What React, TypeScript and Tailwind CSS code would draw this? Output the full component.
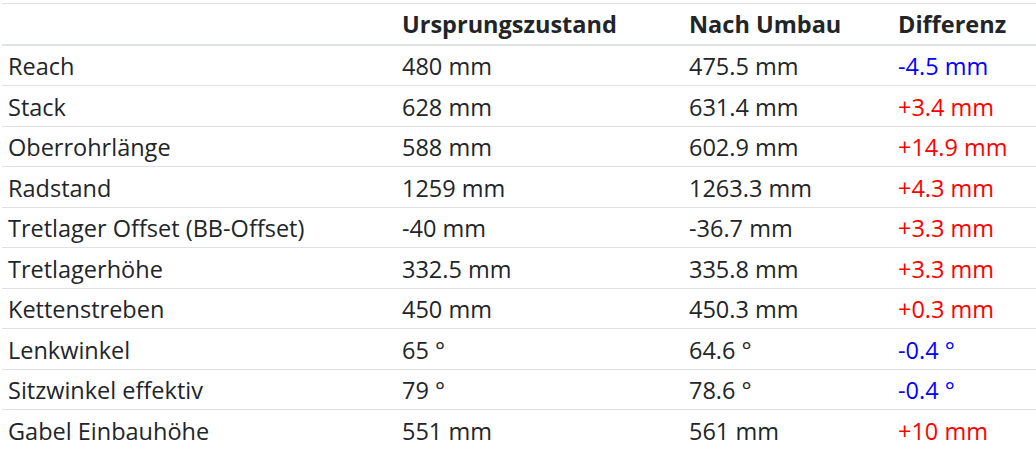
import React from "react";

type Row = { label: string; a: string; b: string; d: string; neg: boolean };

const rows: Row[] = [
  { label: "Reach", a: "480 mm", b: "475.5 mm", d: "-4.5 mm", neg: true },
  { label: "Stack", a: "628 mm", b: "631.4 mm", d: "+3.4 mm", neg: false },
  { label: "Oberrohrlänge", a: "588 mm", b: "602.9 mm", d: "+14.9 mm", neg: false },
  { label: "Radstand", a: "1259 mm", b: "1263.3 mm", d: "+4.3 mm", neg: false },
  { label: "Tretlager Offset (BB-Offset)", a: "-40 mm", b: "-36.7 mm", d: "+3.3 mm", neg: false },
  { label: "Tretlagerhöhe", a: "332.5 mm", b: "335.8 mm", d: "+3.3 mm", neg: false },
  { label: "Kettenstreben", a: "450 mm", b: "450.3 mm", d: "+0.3 mm", neg: false },
  { label: "Lenkwinkel", a: "65 °", b: "64.6 °", d: "-0.4 °", neg: true },
  { label: "Sitzwinkel effektiv", a: "79 °", b: "78.6 °", d: "-0.4 °", neg: true },
  { label: "Gabel Einbauhöhe", a: "551 mm", b: "561 mm", d: "+10 mm", neg: false },
];

const heights = ["h-[40px]", "h-[41px]", "h-[40px]", "h-[41px]", "h-[40px]", "h-[41px]", "h-[40px]", "h-[41px]", "h-[40px]", "h-[40px]"];

export default function App() {
  return (
    <div className="w-[1036px] h-[472px] bg-white overflow-hidden pt-[3px] pl-[2px] text-[#212529] text-[23.5px] leading-none font-['Open_Sans',sans-serif]">
      <div className="border-t border-[#dee2e6]">
        <div className="grid grid-cols-[394px_287px_209px_144px] h-[42px] pt-[2px] items-center border-b-2 border-[#dee2e6] font-bold">
          <div className="pl-[6px]"></div>
          <div className="pl-[6px]">Ursprungszustand</div>
          <div className="pl-[6px]">Nach Umbau</div>
          <div className="pl-[6px]">Differenz</div>
        </div>
        {rows.map((r, i) => (
          <div
            key={r.label}
            className={`grid grid-cols-[394px_287px_209px_144px] items-center pt-[3px] ${heights[i]} ${i < rows.length - 1 ? "border-b border-[#dee2e6]" : ""}`}
          >
            <div className="pl-[6px] whitespace-nowrap">{r.label}</div>
            <div className="pl-[6px] whitespace-nowrap">{r.a}</div>
            <div className="pl-[6px] whitespace-nowrap">{r.b}</div>
            <div className={`pl-[6px] whitespace-nowrap ${r.neg ? "text-[#0000ff]" : "text-[#ff0000]"}`}>{r.d}</div>
          </div>
        ))}
      </div>
    </div>
  );
}
